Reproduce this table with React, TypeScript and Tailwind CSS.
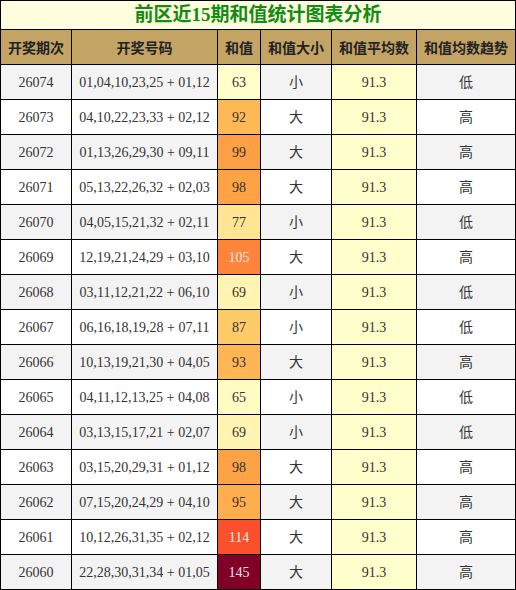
const rows = [
  { issue: "26074", nums: "01,04,10,23,25 + 01,12", sum: 63, size: "小", trend: "低" },
  { issue: "26073", nums: "04,10,22,23,33 + 02,12", sum: 92, size: "大", trend: "高" },
  { issue: "26072", nums: "01,13,26,29,30 + 09,11", sum: 99, size: "大", trend: "高" },
  { issue: "26071", nums: "05,13,22,26,32 + 02,03", sum: 98, size: "大", trend: "高" },
  { issue: "26070", nums: "04,05,15,21,32 + 02,11", sum: 77, size: "小", trend: "低" },
  { issue: "26069", nums: "12,19,21,24,29 + 03,10", sum: 105, size: "大", trend: "高" },
  { issue: "26068", nums: "03,11,12,21,22 + 06,10", sum: 69, size: "小", trend: "低" },
  { issue: "26067", nums: "06,16,18,19,28 + 07,11", sum: 87, size: "小", trend: "低" },
  { issue: "26066", nums: "10,13,19,21,30 + 04,05", sum: 93, size: "大", trend: "高" },
  { issue: "26065", nums: "04,11,12,13,25 + 04,08", sum: 65, size: "小", trend: "低" },
  { issue: "26064", nums: "03,13,15,17,21 + 02,07", sum: 69, size: "小", trend: "低" },
  { issue: "26063", nums: "03,15,20,29,31 + 01,12", sum: 98, size: "大", trend: "高" },
  { issue: "26062", nums: "07,15,20,24,29 + 04,10", sum: 95, size: "大", trend: "高" },
  { issue: "26061", nums: "10,12,26,31,35 + 02,12", sum: 114, size: "大", trend: "高" },
  { issue: "26060", nums: "22,28,30,31,34 + 01,05", sum: 145, size: "大", trend: "高" },
];

const headers = ["开奖期次", "开奖号码", "和值", "和值大小", "和值平均数", "和值均数趋势"];

// YlOrRd scheme, basis-interpolated like d3
const scheme = ["ffffcc", "ffeda0", "fed976", "feb24c", "fd8d3c", "fc4e2a", "e31a1c", "bd0026", "800026"].map((h) => [
  parseInt(h.slice(0, 2), 16),
  parseInt(h.slice(2, 4), 16),
  parseInt(h.slice(4, 6), 16),
]);

const basis = (t1: number, v0: number, v1: number, v2: number, v3: number) => {
  const t2 = t1 * t1;
  const t3 = t2 * t1;
  return ((1 - 3 * t1 + 3 * t2 - t3) * v0 + (4 - 6 * t2 + 3 * t3) * v1 + (1 + 3 * t1 + 3 * t2 - 3 * t3) * v2 + t3 * v3) / 6;
};

const heat = (t: number) => {
  const n = scheme.length - 1;
  let i: number;
  if (t <= 0) {
    t = 0;
    i = 0;
  } else if (t >= 1) {
    t = 1;
    i = n - 1;
  } else {
    i = Math.floor(t * n);
  }
  const out = [0, 1, 2].map((k) => {
    const v1 = scheme[i][k];
    const v2 = scheme[i + 1][k];
    const v0 = i > 0 ? scheme[i - 1][k] : 2 * v1 - v2;
    const v3 = i < n - 1 ? scheme[i + 2][k] : 2 * v2 - v1;
    return Math.max(0, Math.min(255, Math.round(basis((t - i / n) * n, v0, v1, v2, v3))));
  });
  return `rgb(${out[0]}, ${out[1]}, ${out[2]})`;
};

const min = Math.min(...rows.map((r) => r.sum));
const max = Math.max(...rows.map((r) => r.sum));

const App = () => {
  return (
    <div
      className="w-[516px] bg-white"
      style={{ fontFamily: '"Liberation Serif", "Noto Sans CJK SC", serif' }}
    >
      <div className="grid grid-cols-[70px_145px_42px_70px_84px_98px] grid-rows-[28px_repeat(16,34px)] gap-px bg-black p-px text-[14px] text-[#333]">
        <div className="col-span-6 flex items-center justify-center bg-[#ffffe0] text-[19px] font-bold text-[#128c12]">
          前区近15期和值统计图表分析
        </div>
        {headers.map((h) => (
          <div
            key={h}
            className="flex items-center justify-center bg-[#c4a465] font-bold text-[#222]"
            style={{ fontFamily: '"Noto Sans CJK SC", sans-serif' }}
          >
            {h}
          </div>
        ))}
        {rows.map((r, index) => {
          const t = (r.sum - min) / (max - min);
          const bg = index % 2 === 0 ? "bg-[#f3f3f3]" : "bg-white";
          return [
            <div key={r.issue + "a"} className={`flex items-center justify-center ${bg}`}>
              {r.issue}
            </div>,
            <div key={r.issue + "b"} className={`flex items-center justify-center ${bg}`}>
              {r.nums}
            </div>,
            <div
              key={r.issue + "c"}
              className={`flex items-center justify-center ${t > 0.5 ? "text-[#f5e6e6]" : "text-[#333]"}`}
              style={{ backgroundColor: heat(t) }}
            >
              {r.sum}
            </div>,
            <div key={r.issue + "d"} className={`flex items-center justify-center ${bg}`}>
              {r.size}
            </div>,
            <div key={r.issue + "e"} className="flex items-center justify-center bg-[#ffffcc]">
              91.3
            </div>,
            <div key={r.issue + "f"} className={`flex items-center justify-center ${bg}`}>
              {r.trend}
            </div>,
          ];
        })}
      </div>
    </div>
  );
};

export default App;
